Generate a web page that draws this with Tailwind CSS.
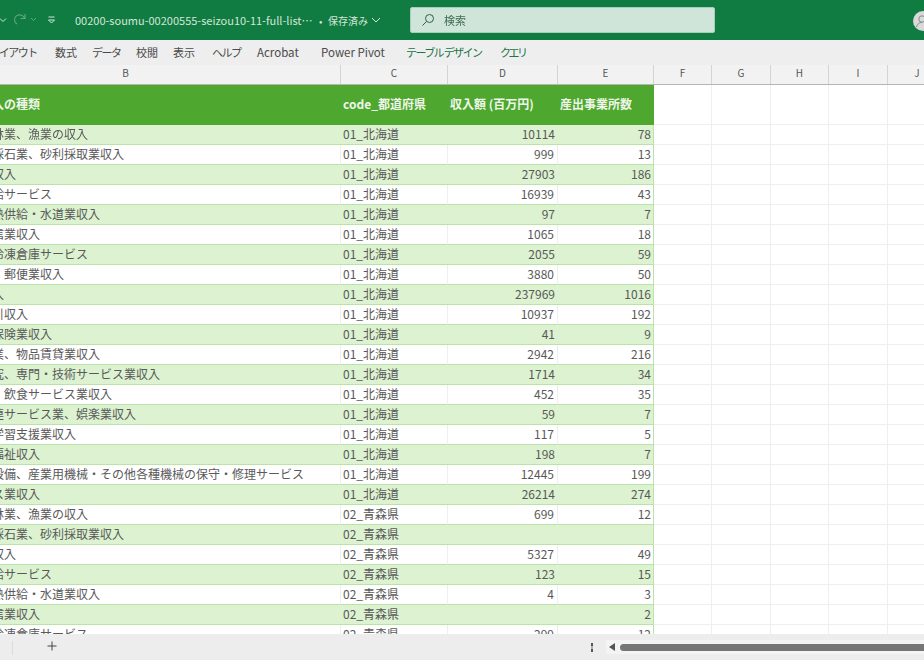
<!DOCTYPE html>
<html lang="ja">
<head>
  <meta charset="UTF-8" />
  <title>Excel</title>
  <script src="https://cdn.jsdelivr.net/npm/@tailwindcss/browser@4"></script>
</head>
<body class="bg-white">
  <div class="w-[924px] h-[660px] flex flex-col overflow-hidden font-['Noto_Sans_CJK_JP','Noto_Sans',sans-serif] text-[#595959] text-[12px] blur-[0.4px]">

    <!-- Title bar -->
    <div class="h-[40px] shrink-0 bg-[#107c41] flex items-center relative text-[#d3e6da]">
      <svg class="absolute left-[0px] top-[16px]" width="8" height="8" viewBox="0 0 8 8" fill="none" stroke="#cfe5da" stroke-width="1"><path d="M0 2.5 L3 5.5 L6 2.5"/></svg>
      <svg class="absolute left-[13px] top-[12px]" width="14" height="15" viewBox="0 0 14 15" fill="none" stroke="#5fa883" stroke-width="1.1"><path d="M12 2 V6.5 H7.5"/><path d="M12 6.5 C10 3 5.5 1.5 2.8 4.5 C0.5 7 1.5 10.5 4 12"/></svg>
      <svg class="absolute left-[30px] top-[17px]" width="7" height="6" viewBox="0 0 7 6" fill="none" stroke="#5fa883" stroke-width="1"><path d="M1 1 L3.5 3.5 L6 1"/></svg>
      <svg class="absolute left-[47px] top-[16px]" width="9" height="9" viewBox="0 0 9 9" fill="none" stroke="#cfe5da" stroke-width="1"><path d="M1.5 1 H7.5"/><path d="M1.5 4 L4.5 7 L7.5 4 Z"/></svg>
      <span class="ml-[75px] w-[235px] text-[11px] whitespace-nowrap">00200-soumu-00200555-seizou10-11-full-list…</span>
      <span class="ml-[9px] text-[10px] w-[9px]">•</span>
      <span class="text-[10px]">保存済み</span>
      <svg class="ml-[3px]" width="10" height="7" viewBox="0 0 10 7" fill="none" stroke="#d3e6da" stroke-width="1"><path d="M1 1 L5 5 L9 1"/></svg>
      <div class="absolute left-[410px] top-[7px] w-[305px] h-[26px] bg-[#cfe5da] rounded-[2px] border border-[#a9cdb9] flex items-center text-[#3f6b52] text-[11px]">
        <svg class="ml-[10px]" width="14" height="14" viewBox="0 0 14 14" fill="none" stroke="#2f5f45" stroke-width="1"><circle cx="8.5" cy="5.5" r="4"/><path d="M5.5 8.5 L1.5 12.5"/></svg>
        <span class="ml-[9px]">検索</span>
      </div>
      <div class="absolute left-[913px] top-[11px] w-[20px] h-[20px] rounded-full bg-[#d9d9d9] overflow-hidden">
        <svg width="20" height="20" viewBox="0 0 20 20" fill="none" stroke="#8a8a8a" stroke-width="1"><circle cx="9" cy="8" r="3.2"/><path d="M3.5 16 C4.5 12.5 6.5 11.5 9 11.5"/></svg>
      </div>
    </div>

    <!-- Ribbon tabs -->
    <div class="h-[25px] shrink-0 bg-[#eeeeee] relative text-[#4a4a4a] text-[11px] leading-[25px] whitespace-nowrap overflow-hidden">
      <span class="absolute left-[-39px] tracking-[-1.5px]">ページレイアウト</span>
      <span class="absolute left-[55px]">数式</span>
      <span class="absolute left-[92px] tracking-[-1.5px]">データ</span>
      <span class="absolute left-[136px]">校閲</span>
      <span class="absolute left-[173px]">表示</span>
      <span class="absolute left-[212px] tracking-[-1.5px]">ヘルプ</span>
      <span class="absolute left-[257px] text-[11.5px]">Acrobat</span>
      <span class="absolute left-[321px] text-[11.5px]">Power Pivot</span>
      <span class="absolute left-[406px] text-[#217346] tracking-[-1.6px]">テーブル デザイン</span>
      <span class="absolute left-[500px] text-[#217346] tracking-[-2.5px]">クエリ</span>
    </div>

    <!-- Column letters -->
    <div id="colHead" class="h-[20px] shrink-0 ml-[-47px] grid grid-cols-[388px_107px_110px_96px_58px_59px_58px_59px_59px] bg-[#f2f2f2] border-b border-[#b5b5b5] text-[10px] leading-[15px] text-center text-[#555555]"></div>

    <!-- Sheet -->
    <div class="flex-1 overflow-hidden">
      <div class="ml-[-47px] h-[40px] grid grid-cols-[388px_107px_110px_96px_58px_59px_58px_59px_59px] leading-[38px] font-bold text-[#eef6ea] text-[12px]">
        <div class="bg-[#4ea72e] pl-[3px]">事業収入の種類</div>
        <div class="bg-[#4ea72e] pl-[2px]">code_都道府県</div>
        <div class="bg-[#4ea72e] pl-[2px]">収入額 (百万円)</div>
        <div class="bg-[#4ea72e] pl-[2px]">産出事業所数</div>
        <div class="border-b border-r border-[#efefef]"></div>
        <div class="border-b border-r border-[#efefef]"></div>
        <div class="border-b border-r border-[#efefef]"></div>
        <div class="border-b border-r border-[#efefef]"></div>
        <div class="border-b border-r border-[#efefef]"></div>
      </div>
      <div id="rows" class="ml-[-47px]"></div>
    </div>

    <!-- Sheet tabs and scrollbar -->
    <div class="h-[26px] shrink-0 bg-[#ededed] flex items-center relative text-[#444444]">
      <div class="absolute left-[12px] top-[7px] w-px h-[14px] bg-[#dcdcdc]"></div>
      <svg class="absolute left-[47px] top-[7px]" width="10" height="10" viewBox="0 0 10 10" stroke="#444444" stroke-width="1"><path d="M5 0.5 V9.5 M0.5 5 H9.5"/></svg>
      <div class="absolute left-[591px] top-[9px] w-[2px] h-[9px] border-y-[3px] border-[#555555] bg-[#555555]/40"></div>
      <div class="absolute left-[606px] top-[6px] w-[318px] h-[14px] bg-[#f4f4f4] flex items-center">
        <svg class="ml-[3px]" width="6" height="8" viewBox="0 0 6 8" fill="#555555"><path d="M6 0 V8 L0 4 Z"/></svg>
        <div class="ml-[5px] flex-1 h-[7px] rounded-l-full bg-[#767676]"></div>
      </div>
    </div>
  </div>

  <script>
    const kinds = [
      '農業、林業、漁業の収入', '鉱業、採石業、砂利採取業収入', '製造業収入', 'ガス供給サービス',
      '電気・熱供給・水道業収入', '情報通信業収入', '運輸、冷凍倉庫サービス', '運輸業、郵便業収入',
      '卸売収入', '金融取引収入', '金融・保険業収入', '不動産業、物品賃貸業収入',
      '学術研究、専門・技術サービス業収入', '宿泊業、飲食サービス業収入', '生活関連サービス業、娯楽業収入',
      '教育、学習支援業収入', '医療、福祉収入', '建築物設備、産業用機械・その他各種機械の保守・修理サービス', 'サービス業収入',
      '農業、林業、漁業の収入', '鉱業、採石業、砂利採取業収入', '製造業収入', 'ガス供給サービス',
      '電気・熱供給・水道業収入', '情報通信業収入', '運輸、冷凍倉庫サービス'
    ];
    const amounts = [10114, 999, 27903, 16939, 97, 1065, 2055, 3880, 237969, 10937, 41, 2942, 1714, 452, 59, 117, 198, 12445, 26214, 699, '', 5327, 123, 4, '', 299];
    const sites = [78, 13, 186, 43, 7, 18, 59, 50, 1016, 192, 9, 216, 34, 35, 7, 5, 7, 199, 274, 12, '', 49, 15, 3, 2, 12];

    // column B really starts further left than the window, so its letter sits off-centre
    document.getElementById('colHead').innerHTML = ['B', 'C', 'D', 'E', 'F', 'G', 'H', 'I', 'J']
      .map(l => `<div class="border-r border-[#d4d4d4]">${l === 'B' ? '<span class="mr-[42px]">B</span>' : l}</div>`).join('');

    const rows = document.getElementById('rows');
    kinds.forEach((kind, i) => {
      const pref = i < 19 ? '01_北海道' : '02_青森県';
      const green = i % 2 === 0;
      const bg = green ? 'bg-[#dcf2d0] border-[#b9e4a5]' : 'bg-white border-[#b9e4a5]';
      const sep = green ? '' : 'border-r border-r-[#efefef]';
      const empty = '<div class="border-b border-r border-[#efefef]"></div>';
      rows.innerHTML += `
        <div class="h-[20px] grid grid-cols-[388px_107px_110px_96px_58px_59px_58px_59px_59px] leading-[17px] whitespace-nowrap">
          <div class="border-b ${bg} ${sep} pl-[3px] overflow-hidden">${kind}</div>
          <div class="border-b ${bg} ${sep} pl-[2px]">${pref}</div>
          <div class="border-b ${bg} ${sep} pr-[3px] text-right">${amounts[i]}</div>
          <div class="border-b border-r border-r-[#b9e4a5] ${bg} pr-[2px] text-right">${sites[i]}</div>
          ${empty}${empty}${empty}${empty}${empty}
        </div>`;
    });
  </script>
</body>
</html>
